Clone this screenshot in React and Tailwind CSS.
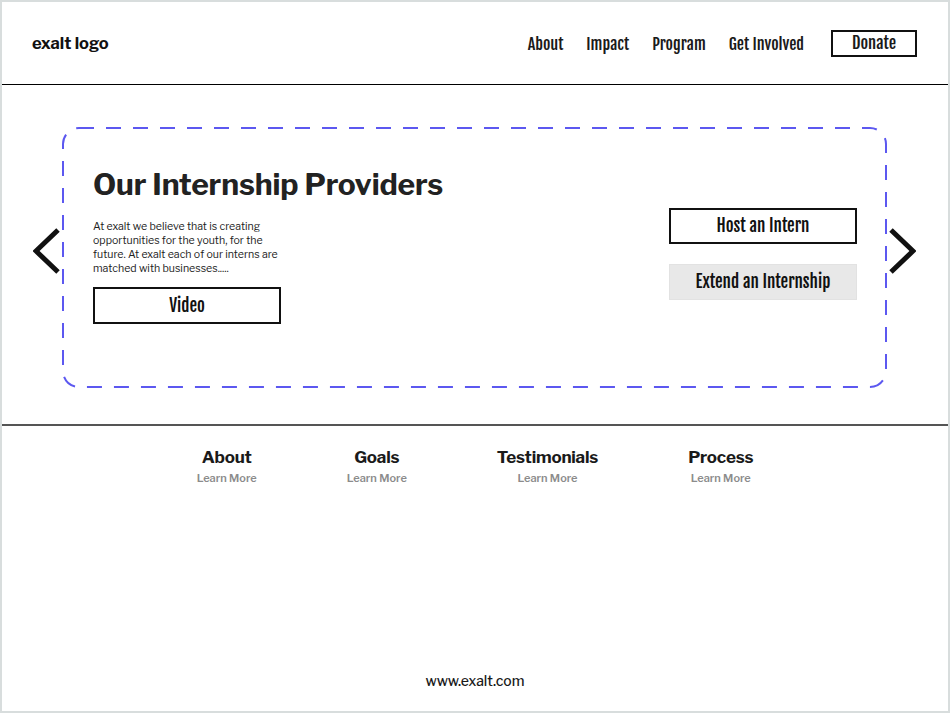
import React from "react";

const condensed = { fontFamily: "'Fjalla One', 'Liberation Sans Narrow', 'DejaVu Sans Condensed', 'Roboto', sans-serif" };

const navLinks = ["About", "Impact", "Program", "Get Involved"];

const footerLinks = ["About", "Goals", "Testimonials", "Process"];

const Chevron = ({ dir }) => (
    <svg width="28" height="48" viewBox="0 0 28 48" className="mt-[100px] shrink-0">
        <polyline
            points={dir === "left" ? "25,3 3,24 25,45" : "3,3 25,24 3,45"}
            fill="none"
            stroke="#111"
            strokeWidth="5"
        />
    </svg>
);

const App = () => {
    return (
        <div
            className="w-[950px] h-[713px] border-2 border-[#d8dddd] bg-white flex flex-col text-[#1c1c1c]"
            style={{ fontFamily: "'Libre Franklin', Inter, 'Liberation Sans', sans-serif" }}
        >
            {/* Header */}
            <header className="h-[83px] shrink-0 border-b border-black flex items-center justify-between pl-[30px] pr-[31px]">
                <div className="text-[16.5px] font-bold text-[#111]">exalt logo</div>
                <nav className="flex items-center gap-[23px] text-[16px] text-[#1a1a1a]" style={condensed}>
                    {navLinks.map((link) => (
                        <a key={link} className="cursor-pointer pt-[2px]">{link}</a>
                    ))}
                    <button className="ml-[4px] w-[86px] h-[27px] border-2 border-[#111] flex items-center justify-center text-[16.5px] pt-[1px]">
                        Donate
                    </button>
                </nav>
            </header>

            {/* Carousel */}
            <section className="h-[341px] shrink-0 border-b-2 border-[#555] flex items-start px-[31px] pt-[42px] gap-[1px]">
                <Chevron dir="left" />
                <div className="relative w-[825px] h-[261px] flex justify-between pl-[31px] pr-[30px]">
                    <svg className="absolute inset-0 pointer-events-none" width="825" height="261">
                        <rect x="1" y="1" width="823" height="259" rx="16" fill="none" stroke="#5c58f0" strokeWidth="2" strokeDasharray="15 12" />
                    </svg>

                    {/* Left column */}
                    <div className="pt-[39px]">
                        <h1 className="text-[30px] leading-[36px] font-bold text-[#222] tracking-[-0.15px] whitespace-nowrap">
                            Our Internship Providers
                        </h1>
                        <p className="mt-[18px] text-[10.6px] leading-[14px] text-[#222] whitespace-nowrap">
                            At exalt we believe that is creating<br />
                            opportunities for the youth, for the<br />
                            future. At exalt each of our interns are<br />
                            matched with businesses.....
                        </p>
                        <button
                            className="mt-[11px] w-[188px] h-[37px] border-2 border-[#111] flex items-center justify-center text-[17px] text-[#111]"
                            style={condensed}
                        >
                            Video
                        </button>
                    </div>

                    {/* Right column */}
                    <div className="pt-[81px] flex flex-col gap-[20px]" style={condensed}>
                        <button className="w-[188px] h-[36px] border-2 border-[#111] flex items-center justify-center text-[17px] text-[#111]">
                            Host an Intern
                        </button>
                        <button className="w-[188px] h-[36px] bg-[#e8e8e8] border border-[#e2e2e2] flex items-center justify-center text-[17px] text-[#111]">
                            Extend an Internship
                        </button>
                    </div>
                </div>
                <Chevron dir="right" />
            </section>

            {/* Footer */}
            <footer className="flex-1 flex flex-col">
                <div className="pt-[20px] flex justify-center gap-[90px]">
                    {footerLinks.map((item) => (
                        <div key={item} className="flex flex-col items-center">
                            <div className="text-[17px] leading-[22px] font-bold text-[#1a1a1a] tracking-[-0.2px]">{item}</div>
                            <a className="mt-[3px] text-[11px] leading-[14px] font-semibold text-[#8c8c8c] cursor-pointer">Learn More</a>
                        </div>
                    ))}
                </div>
                <div className="mt-auto pb-[21px] text-center text-[14px] leading-[18px] font-medium text-[#1a1a1a]">
                    www.exalt.com
                </div>
            </footer>
        </div>
    );
};

export default App;
